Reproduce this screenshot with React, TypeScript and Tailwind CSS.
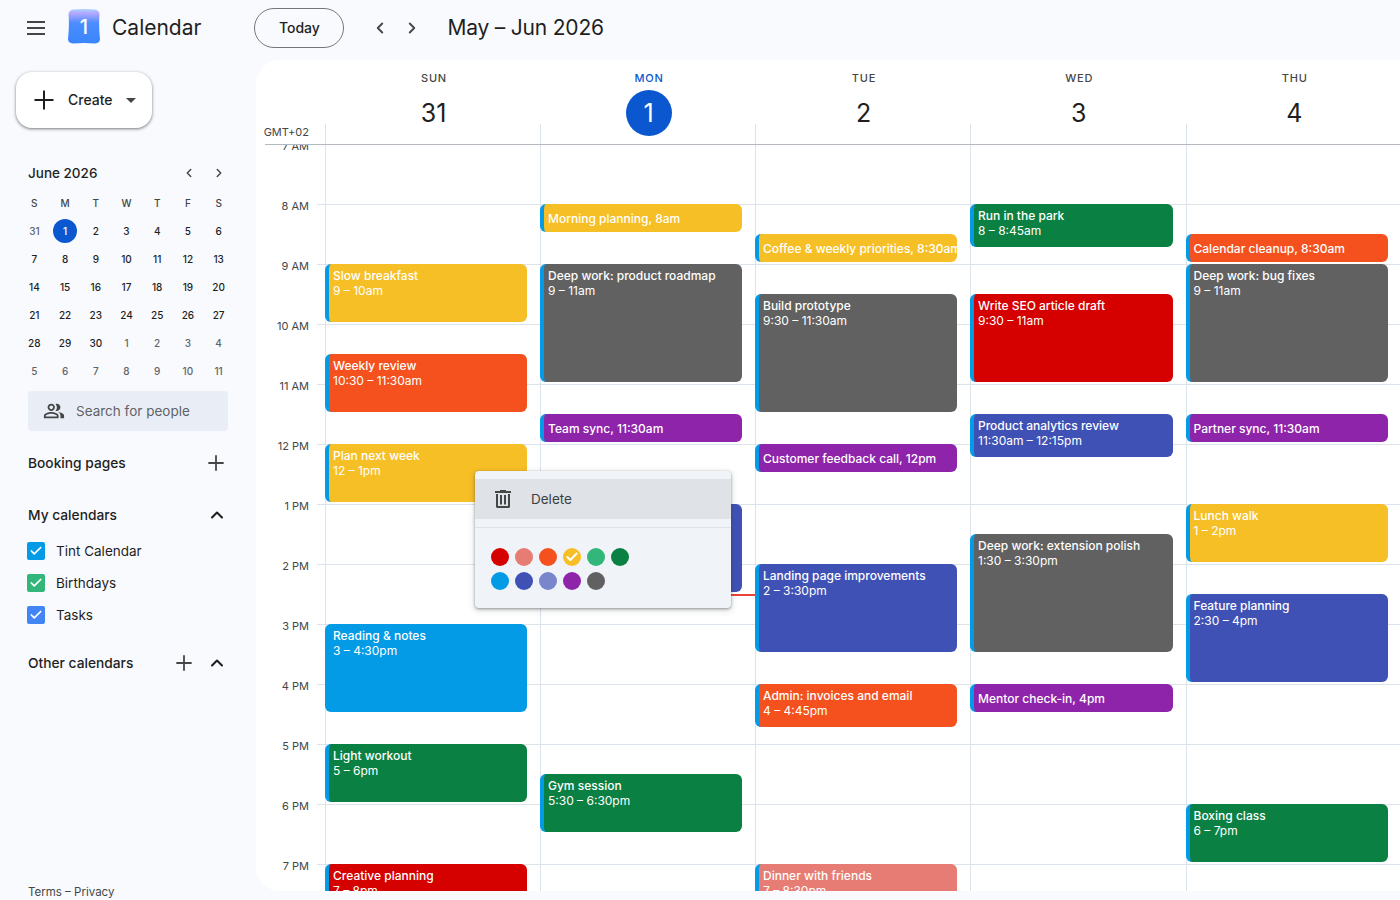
import { ChevronLeft, ChevronRight, ChevronUp, Plus, Check } from 'lucide-react'
import { MdOutlinePeopleAlt } from 'react-icons/md'

const COLORS = {
    red: 'bg-[#d50000]',
    flamingo: 'bg-[#e67c73]',
    orange: 'bg-[#f4511e]',
    yellow: 'bg-[#f6bf26]',
    green: 'bg-[#0b8043]',
    blue: 'bg-[#039be5]',
    indigo: 'bg-[#3f51b5]',
    purple: 'bg-[#8e24aa]',
    gray: 'bg-[#616161]',
}

type Ev = { top: number; h: number; color: keyof typeof COLORS; title: string; time?: string }

const DAYS: { name: string; num: string; width: string; today?: boolean; events: Ev[] }[] = [
    {
        name: 'SUN', num: '31', width: 'w-[215px]', events: [
            { top: 264, h: 58, color: 'yellow', title: 'Slow breakfast', time: '9 – 10am' },
            { top: 354, h: 58, color: 'orange', title: 'Weekly review', time: '10:30 – 11:30am' },
            { top: 444, h: 58, color: 'yellow', title: 'Plan next week', time: '12 – 1pm' },
            { top: 624, h: 88, color: 'blue', title: 'Reading & notes', time: '3 – 4:30pm' },
            { top: 744, h: 58, color: 'green', title: 'Light workout', time: '5 – 6pm' },
            { top: 864, h: 58, color: 'red', title: 'Creative planning', time: '7 – 8pm' },
        ],
    },
    {
        name: 'MON', num: '1', width: 'w-[215px]', today: true, events: [
            { top: 204, h: 28, color: 'yellow', title: 'Morning planning, 8am' },
            { top: 264, h: 118, color: 'gray', title: 'Deep work: product roadmap', time: '9 – 11am' },
            { top: 414, h: 28, color: 'purple', title: 'Team sync, 11:30am' },
            { top: 504, h: 88, color: 'indigo', title: 'Design review', time: '1 – 2:30pm' },
            { top: 774, h: 58, color: 'green', title: 'Gym session', time: '5:30 – 6:30pm' },
        ],
    },
    {
        name: 'TUE', num: '2', width: 'w-[215px]', events: [
            { top: 234, h: 28, color: 'yellow', title: 'Coffee & weekly priorities, 8:30am' },
            { top: 294, h: 118, color: 'gray', title: 'Build prototype', time: '9:30 – 11:30am' },
            { top: 444, h: 28, color: 'purple', title: 'Customer feedback call, 12pm' },
            { top: 564, h: 88, color: 'indigo', title: 'Landing page improvements', time: '2 – 3:30pm' },
            { top: 684, h: 43, color: 'orange', title: 'Admin: invoices and email', time: '4 – 4:45pm' },
            { top: 864, h: 88, color: 'flamingo', title: 'Dinner with friends', time: '7 – 8:30pm' },
        ],
    },
    {
        name: 'WED', num: '3', width: 'w-[215.5px]', events: [
            { top: 204, h: 43, color: 'green', title: 'Run in the park', time: '8 – 8:45am' },
            { top: 294, h: 88, color: 'red', title: 'Write SEO article draft', time: '9:30 – 11am' },
            { top: 414, h: 43, color: 'indigo', title: 'Product analytics review', time: '11:30am – 12:15pm' },
            { top: 534, h: 118, color: 'gray', title: 'Deep work: extension polish', time: '1:30 – 3:30pm' },
            { top: 684, h: 28, color: 'purple', title: 'Mentor check-in, 4pm' },
        ],
    },
    {
        name: 'THU', num: '4', width: 'w-[215.5px]', events: [
            { top: 234, h: 28, color: 'orange', title: 'Calendar cleanup, 8:30am' },
            { top: 264, h: 118, color: 'gray', title: 'Deep work: bug fixes', time: '9 – 11am' },
            { top: 414, h: 28, color: 'purple', title: 'Partner sync, 11:30am' },
            { top: 504, h: 58, color: 'yellow', title: 'Lunch walk', time: '1 – 2pm' },
            { top: 594, h: 88, color: 'indigo', title: 'Feature planning', time: '2:30 – 4pm' },
            { top: 804, h: 58, color: 'green', title: 'Boxing class', time: '6 – 7pm' },
        ],
    },
]

const HOURS = ['7 AM', '8 AM', '9 AM', '10 AM', '11 AM', '12 PM', '1 PM', '2 PM', '3 PM', '4 PM', '5 PM', '6 PM', '7 PM']

const MINI = [
    ['31', '1', '2', '3', '4', '5', '6'],
    ['7', '8', '9', '10', '11', '12', '13'],
    ['14', '15', '16', '17', '18', '19', '20'],
    ['21', '22', '23', '24', '25', '26', '27'],
    ['28', '29', '30', '1', '2', '3', '4'],
    ['5', '6', '7', '8', '9', '10', '11'],
]

const SWATCHES = [
    ['bg-[#d50000]', 'bg-[#e67c73]', 'bg-[#f4511e]', 'bg-[#f6bf26]', 'bg-[#33b679]', 'bg-[#0b8043]'],
    ['bg-[#039be5]', 'bg-[#3f51b5]', 'bg-[#7986cb]', 'bg-[#8e24aa]', 'bg-[#616161]'],
]

function Logo() {
    return (
        <div className="relative w-8 h-[35px] flex items-center justify-center">
            <svg className="absolute inset-0" width="32" height="35" viewBox="0 0 32 35">
                <defs>
                    <linearGradient id="logo" x1="0" y1="0" x2="0" y2="1">
                        <stop offset="0" stopColor="#a9d4ff" />
                        <stop offset="0.12" stopColor="#b5a8ff" />
                        <stop offset="0.4" stopColor="#4c8dff" />
                        <stop offset="1" stopColor="#3a85fb" />
                    </linearGradient>
                </defs>
                <path d="M5 0.5 Q16 -0.5 27 0.5 Q31 1 31.5 5 Q30.5 17 32 30 Q32 34 27 34.5 Q16 33.5 5 34.5 Q0 34 0 30 Q1.5 17 0.5 5 Q1 1 5 0.5 Z" fill="url(#logo)" />
            </svg>
            <span className="relative text-white text-[20px] font-medium">1</span>
        </div>
    )
}

function TrashIcon() {
    return (
        <svg width="16" height="18" viewBox="0 0 16 18" className="text-[#444746]" fill="currentColor">
            <path d="M5 0h6v1h5v2H0V1h5z" />
            <path d="M1 4h2v12h10V4h2v12.5a1.5 1.5 0 0 1-1.5 1.5h-11A1.5 1.5 0 0 1 1 16.500z" />
            <rect x="5" y="5" width="2" height="9.500" />
            <rect x="9" y="5" width="2" height="9.500" />
        </svg>
    )
}

function Checkbox({ color }: { color: string }) {
    return (
        <div className={`w-[18px] h-[18px] rounded-[2px] flex items-center justify-center ${color}`}>
            <Check className="w-3.5 h-3.5 text-white" strokeWidth={3} />
        </div>
    )
}

function Sidebar() {
    return (
        <aside className="w-[256px] shrink-0 flex flex-col">
            <div className="pl-4 pt-3">
                <button className="w-[136px] h-14 bg-white rounded-2xl shadow-[0_1px_3px_1px_rgba(60,64,67,0.25),0_1px_2px_rgba(60,64,67,0.4)] flex items-center pl-[13px] text-[#1f1f1f]">
                    <Plus className="w-[30px] h-[30px]" strokeWidth={1.6} />
                    <span className="ml-[9px] text-sm font-medium">Create</span>
                    <span className="ml-[13px] w-0 h-0 border-x-[5px] border-x-transparent border-t-[5px] border-t-[#444746]"></span>
                </button>
            </div>

            <div className="pl-7 pr-[30px] mt-[33px]">
                <div className="flex items-center justify-between h-6">
                    <span className="text-[13.5px] font-medium text-[#1f1f1f]">June 2026</span>
                    <div className="flex items-center gap-4 text-[#444746]">
                        <ChevronLeft className="w-3.5 h-3.5" strokeWidth={2.5} />
                        <ChevronRight className="w-3.5 h-3.5" strokeWidth={2.5} />
                    </div>
                </div>
            </div>

            <div className="ml-[19px] mt-[4px] w-[215px] grid grid-cols-7">
                {['S', 'M', 'T', 'W', 'T', 'F', 'S'].map((d, i) => (
                    <div key={i} className="h-7 flex items-center justify-center text-[10px] font-medium text-[#444746]">{d}</div>
                ))}
                {MINI.map((row, r) =>
                    row.map((d, i) => {
                        const muted = (r === 0 && i === 0) || (r === 4 && i > 2) || r === 5
                        const sel = r === 0 && i === 1
                        return (
                            <div key={`${r}-${i}`} className="h-7 flex items-center justify-center">
                                <span className={`w-6 h-6 rounded-full flex items-center justify-center text-[10px] font-medium ${sel ? 'bg-[#0b57d0] text-white' : muted ? 'text-[#5f6368]' : 'text-[#1f1f1f]'}`}>{d}</span>
                            </div>
                        )
                    })
                )}
            </div>

            <div className="mx-7 mt-[6px] h-10 rounded bg-[#e9eef6] flex items-center pl-[15px] text-[#5f6368]">
                <MdOutlinePeopleAlt className="w-[22px] h-[22px] text-[#444746]" />
                <span className="ml-[11px] text-[13.5px]">Search for people</span>
            </div>

            <div className="pl-7 pr-7 mt-[20px] h-6 flex items-center justify-between">
                <span className="text-[13.75px] font-medium text-[#1f1f1f]">Booking pages</span>
                <Plus className="w-6 h-6 text-[#444746]" strokeWidth={1.8} />
            </div>

            <div className="pl-7 pr-[29px] mt-[28px] h-6 flex items-center justify-between">
                <span className="text-[13.75px] font-medium text-[#1f1f1f]">My calendars</span>
                <ChevronUp className="w-5 h-5 text-[#1f1f1f]" strokeWidth={2.5} />
            </div>

            <div className="flex flex-col mt-[8px]">
                {[
                    { label: 'Tint Calendar', color: 'bg-[#039be5]' },
                    { label: 'Birthdays', color: 'bg-[#33b679]' },
                    { label: 'Tasks', color: 'bg-[#4285f4]' },
                ].map(c => (
                    <div key={c.label} className="h-8 pl-[27px] flex items-center gap-[11px]">
                        <Checkbox color={c.color} />
                        <span className="text-[13.5px] text-[#1f1f1f]">{c.label}</span>
                    </div>
                ))}
            </div>

            <div className="pl-7 pr-[29px] mt-[20px] h-6 flex items-center">
                <span className="text-[13.75px] font-medium text-[#1f1f1f] flex-1">Other calendars</span>
                <Plus className="w-6 h-6 text-[#444746] mr-[11px]" strokeWidth={1.8} />
                <ChevronUp className="w-5 h-5 text-[#1f1f1f]" strokeWidth={2.5} />
            </div>

            <div className="mt-auto pl-7 h-[15px] text-[11.5px] leading-[15px] text-[#444746]">Terms – Privacy</div>
        </aside>
    )
}

function EventCard({ ev }: { ev: Ev }) {
    return (
        <div
            className={`absolute left-[-1px] right-[13px] rounded-md overflow-hidden border-l-[4px] border-l-[#039be5] pl-[4px] pt-[4px] text-white text-xs leading-[15px] font-medium ${COLORS[ev.color]}`}
            style={{ top: ev.top - 145, height: ev.h }}
        >
            <div className={`whitespace-nowrap ${ev.time ? '' : 'mt-[3px]'}`}>{ev.title}</div>
            {ev.time && <div className="whitespace-nowrap font-normal">{ev.time}</div>}
        </div>
    )
}

function Popup() {
    return (
        <div className="absolute left-[475px] top-[471px] w-[256px] h-[137px] rounded bg-[#f0f4f9] shadow-[0_1px_3px_rgba(60,64,67,0.5),0_2px_6px_1px_rgba(60,64,67,0.15)] pt-2 z-20">
            <div className="h-10 bg-[#dfe3e7] flex items-center pl-5 text-[#3c4043]">
                <TrashIcon />
                <span className="ml-5 text-[13.5px]">Delete</span>
            </div>
            <div className="mt-2 border-t border-[#dde3ea]"></div>
            <div className="pl-4 pt-5 flex flex-col gap-[6px]">
                {SWATCHES.map((row, r) => (
                    <div key={r} className="flex gap-[6px]">
                        {row.map((c, i) => (
                            <div key={c} className={`w-[18px] h-[18px] rounded-full flex items-center justify-center ${c}`}>
                                {r === 0 && i === 3 && <Check className="w-3.5 h-3.5 text-white" strokeWidth={3.5} />}
                            </div>
                        ))}
                    </div>
                ))}
            </div>
        </div>
    )
}

export default function App() {
    return (
        <div className="relative w-[1400px] h-[900px] overflow-hidden bg-[#f8fafd] font-['Inter','Liberation_Sans',sans-serif] flex flex-col">
            {/* Top bar */}
            <header className="h-[60px] shrink-0 flex items-center pb-[4px]">
                <div className="ml-[27px] w-[18px] flex flex-col gap-[4px]">
                    <div className="h-[2px] bg-[#444746]"></div>
                    <div className="h-[2px] bg-[#444746]"></div>
                    <div className="h-[2px] bg-[#444746]"></div>
                </div>
                <div className="ml-[23px] -mt-[3px]"><Logo /></div>
                <span className="ml-3 text-[21px] text-[#1f1f1f]">Calendar</span>
                <button className="ml-[53px] w-[90px] h-10 rounded-full border border-[#747775] text-sm font-medium text-[#1f1f1f]">Today</button>
                <ChevronLeft className="ml-[27px] w-[18px] h-[18px] text-[#444746]" strokeWidth={2.5} />
                <ChevronRight className="ml-[14px] w-[18px] h-[18px] text-[#444746]" strokeWidth={2.5} />
                <span className="ml-[26px] text-[21px] tracking-[-0.2px] text-[#1f1f1f]">May – Jun 2026</span>
            </header>

            <div className="flex-1 flex min-h-0">
                <Sidebar />

                {/* Week view */}
                <main className="flex-1 mb-[9px] bg-white rounded-l-[24px] flex flex-col overflow-hidden">
                    <div className="h-[84px] shrink-0 flex">
                        <div className="w-[69px] shrink-0 relative">
                            <span className="absolute right-[16px] bottom-[5px] text-[11px] leading-[14px] text-[#444746]">GMT+02</span>
                        </div>
                        {DAYS.map(d => (
                            <div key={d.name} className={`${d.width} shrink-0 relative flex flex-col items-center pt-[11px] pl-[2px]`}>
                                <div className="absolute left-0 bottom-0 h-5 w-px bg-[#dde3ea]"></div>
                                <span className={`ml-[1px] text-[11px] leading-[14px] font-medium tracking-[0.8px] ${d.today ? 'text-[#0b57d0]' : 'text-[#444746]'}`}>{d.name}</span>
                                <span className={`mt-[5px] pt-[2px] w-[46px] h-[46px] rounded-full flex items-center justify-center text-[25px] ${d.today ? 'bg-[#0b57d0] text-white' : 'text-[#1f1f1f]'}`}>{d.num}</span>
                            </div>
                        ))}
                    </div>
                    <div className="h-px shrink-0 ml-[9px] bg-[#b4b8bf]"></div>

                    <div className="flex-1 flex min-h-0 overflow-hidden">
                        <div className="w-[69px] shrink-0">
                            {HOURS.map((h, i) => (
                                <div key={h} className={`relative ${i > 0 ? 'h-[60px]' : 'h-[59px]'}`}>
                                    <span className={`absolute right-[16px] text-[11px] leading-[14px] text-[#444746] ${i > 0 ? '-top-[5px]' : '-top-[6px]'}`}>{h}</span>
                                    {i > 0 && <div className="absolute right-0 top-0 w-2 h-px bg-[#dde3ea]"></div>}
                                </div>
                            ))}
                        </div>
                        {DAYS.map(d => (
                            <div key={d.name} className={`${d.width} shrink-0 relative border-l border-[#dde3ea]`}>
                                {HOURS.map((h, i) => (
                                    <div key={h} className={i > 0 ? 'h-[60px] border-t border-[#dde3ea]' : 'h-[59px]'}></div>
                                ))}
                                {d.events.map(ev => <EventCard key={ev.title} ev={ev} />)}
                                {d.today && <div className="absolute left-0 right-0 top-[449px] h-[2px] bg-[#ea4335]"></div>}
                            </div>
                        ))}
                    </div>
                </main>
            </div>

            <Popup />
        </div>
    )
}
